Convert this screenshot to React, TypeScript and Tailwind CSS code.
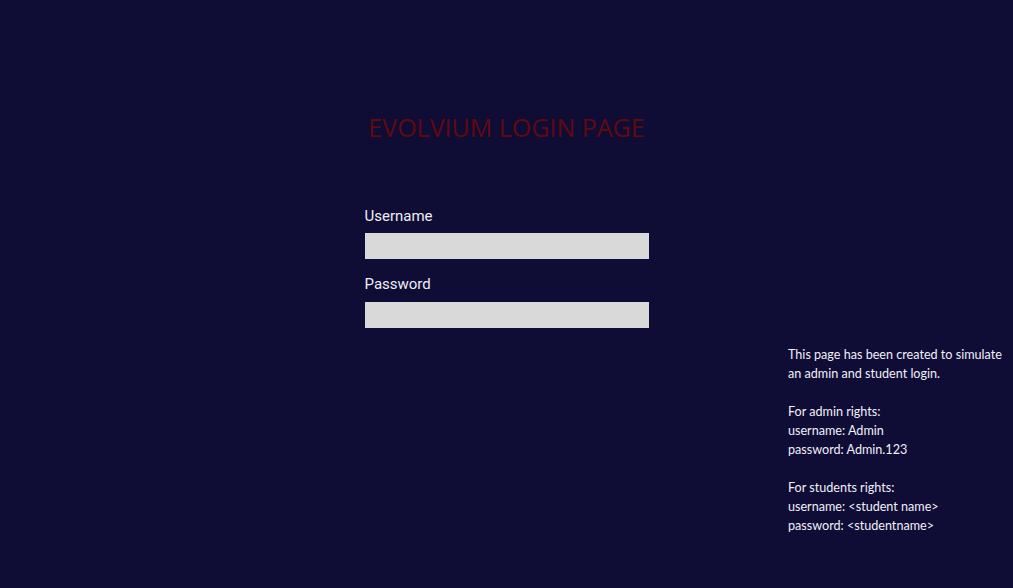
export default function App() {
	return (
		<div className="relative h-[588px] w-[1013px] overflow-hidden bg-[#0f0c36]">
			<div className="flex flex-col items-center pt-[111px]">
				<h1 className="text-[25px] leading-[32px] text-[#600a0e] [font-family:'Open_Sans',sans-serif]">
					EVOLVIUM LOGIN PAGE
				</h1>
				<form className="mt-[63px] flex w-[284px] flex-col [font-family:Roboto,sans-serif]">
					<label htmlFor="username" className="text-[15px] leading-[20px] text-[#eeeef4]">
						Username
					</label>
					<input id="username" className="mt-[7px] h-[26px] w-full bg-[#d9d9d9] outline-none" />
					<label htmlFor="password" className="mt-[15px] text-[15px] leading-[20px] text-[#eeeef4]">
						Password
					</label>
					<input id="password" type="password" className="mt-[8px] h-[26px] w-full bg-[#d9d9d9] outline-none" />
				</form>
			</div>
			<div className="absolute left-[788px] top-[345px] text-[12.6px] leading-[19px] text-[#f0f0f5] [font-family:Lato,sans-serif]">
				<p>This page has been created to simulate</p>
				<p>an admin and student login.</p>
				<p className="mt-[19px]">For admin rights:</p>
				<p>username: Admin</p>
				<p>password: Admin.123</p>
				<p className="mt-[19px]">For students rights:</p>
				<p>username: &lt;student name&gt;</p>
				<p>password: &lt;studentname&gt;</p>
			</div>
		</div>
	)
}
